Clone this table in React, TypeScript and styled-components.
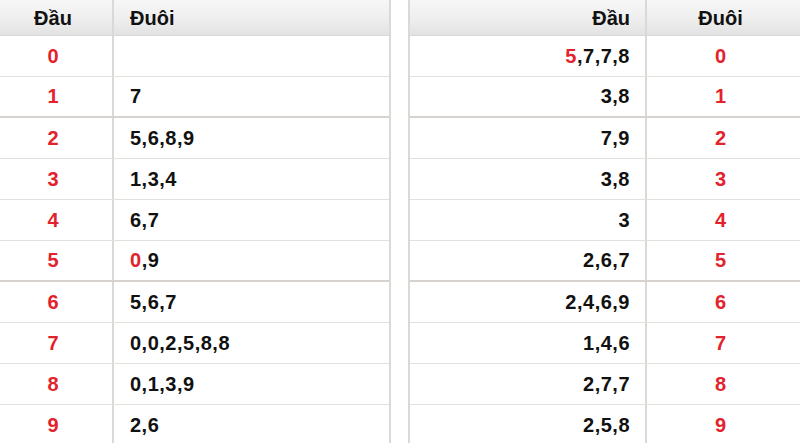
import * as React from "react";
import styled, { createGlobalStyle } from "styled-components";

const GlobalStyle = createGlobalStyle`
  html, body {
    margin: 0;
    padding: 0;
    background: #ffffff;
  }
  body {
    font-family: "Liberation Sans", Arial, sans-serif;
  }
`;

type Row = { key: string; values: string; thick?: boolean; redFirst?: boolean };

const leftRows: Row[] = [
  { key: "0", values: "" },
  { key: "1", values: "7", thick: true },
  { key: "2", values: "5,6,8,9" },
  { key: "3", values: "1,3,4" },
  { key: "4", values: "6,7" },
  { key: "5", values: "0,9", redFirst: true, thick: true },
  { key: "6", values: "5,6,7" },
  { key: "7", values: "0,0,2,5,8,8" },
  { key: "8", values: "0,1,3,9" },
  { key: "9", values: "2,6" },
];

const rightRows: Row[] = [
  { key: "0", values: "5,7,7,8", redFirst: true },
  { key: "1", values: "3,8", thick: true },
  { key: "2", values: "7,9" },
  { key: "3", values: "3,8" },
  { key: "4", values: "3" },
  { key: "5", values: "2,6,7", thick: true },
  { key: "6", values: "2,4,6,9" },
  { key: "7", values: "1,4,6" },
  { key: "8", values: "2,7,7" },
  { key: "9", values: "2,5,8" },
];

const renderValues = (row: Row) => {
  if (!row.redFirst || !row.values) return row.values;
  return (
    <>
      <Red>{row.values.charAt(0)}</Red>
      {row.values.slice(1)}
    </>
  );
};

export default function App(): JSX.Element {
  return (
    <>
      <GlobalStyle />
      <Page>
        <Table side="left">
          <HeadRow cols="114px 1fr">
            <HeadCell align="center">Đầu</HeadCell>
            <HeadCell align="left">Đuôi</HeadCell>
          </HeadRow>
          {leftRows.map(row => (
            <BodyRow key={row.key} cols="114px 1fr" thick={row.thick}>
              <KeyCell align="center">{row.key}</KeyCell>
              <ValueCell align="left">{renderValues(row)}</ValueCell>
            </BodyRow>
          ))}
        </Table>
        <Table side="right">
          <HeadRow cols="237px 1fr">
            <HeadCell align="right">Đầu</HeadCell>
            <HeadCell align="center">Đuôi</HeadCell>
          </HeadRow>
          {rightRows.map(row => (
            <BodyRow key={row.key} cols="237px 1fr" thick={row.thick}>
              <ValueCell align="right">{renderValues(row)}</ValueCell>
              <KeyCell align="center">{row.key}</KeyCell>
            </BodyRow>
          ))}
        </Table>
      </Page>
    </>
  );
}

const Page = styled.div`
  display: flex;
  gap: 17px;
  width: 800px;
  height: 443px;
  overflow: hidden;
`;

const Table = styled.div<{ side: "left" | "right" }>`
  width: ${p => (p.side === "left" ? "389px" : "390px")};
  flex-shrink: 0;
  border-left: ${p => (p.side === "right" ? "2px solid #dcd8d4" : "none")};
  border-right: ${p => (p.side === "left" ? "2px solid #dcd8d4" : "none")};
`;

const HeadRow = styled.div<{ cols: string }>`
  display: grid;
  grid-template-columns: ${p => p.cols};
  height: 35px;
  border-bottom: 1px solid #d8d8d8;
  background: linear-gradient(to bottom, #f7f7f7 0%, #ededed 60%, #e2e2e2 100%);
`;

const BodyRow = styled.div<{ cols: string; thick?: boolean }>`
  display: grid;
  grid-template-columns: ${p => p.cols};
  height: ${p => (p.thick ? "39px" : "40px")};
  border-bottom: ${p => (p.thick ? "2px solid #d6d2ce" : "1px solid #e2dfdc")};
`;

const Cell = styled.div<{ align: "left" | "center" | "right" }>`
  display: flex;
  align-items: center;
  justify-content: ${p =>
    p.align === "left" ? "flex-start" : p.align === "right" ? "flex-end" : "center"};
  padding: ${p =>
    p.align === "left" ? "0 0 0 16px" : p.align === "right" ? "0 15px 0 0" : "0 6px 0 0"};
  font-weight: bold;
  font-size: 20px;
  &:first-child {
    border-right: 2px solid #dcd8d4;
  }
`;

const HeadCell = styled(Cell)`
  color: #111111;
  font-size: 20px;
  padding-top: 1px;
`;

const KeyCell = styled(Cell)`
  color: #e3232c;
`;

const ValueCell = styled(Cell)`
  color: #111111;
  letter-spacing: 0.5px;
`;

const Red = styled.span`
  color: #e3232c;
`;
